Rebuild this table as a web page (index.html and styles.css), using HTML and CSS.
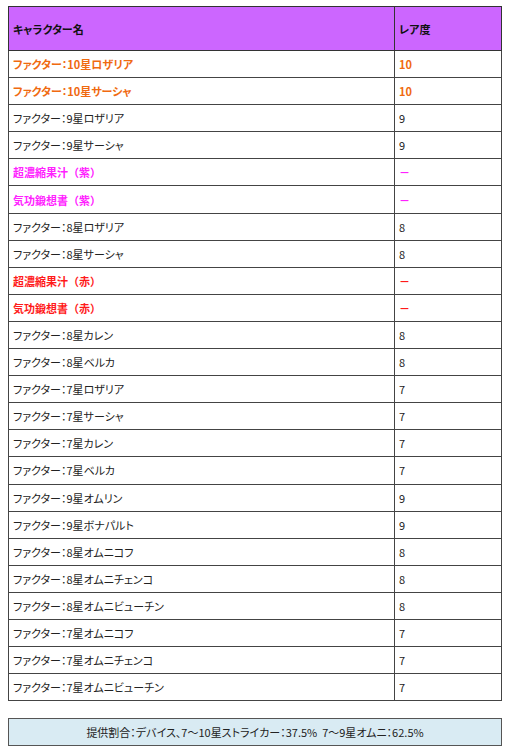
FILE: index.html
```html
<!DOCTYPE html>
<html lang="ja">
<head>
<meta charset="utf-8">
<link rel="stylesheet" href="styles.css">
</head>
<body>
<table class="gacha">
<thead>
<tr><th class="c-name">キャラクター名</th><th class="c-rare">レア度</th></tr>
</thead>
<tbody>
<tr class="orange"><td>ファクター：10星ロザリア</td><td>10</td></tr>
<tr class="orange"><td>ファクター：10星サーシャ</td><td>10</td></tr>
<tr><td>ファクター：9星ロザリア</td><td>9</td></tr>
<tr><td>ファクター：9星サーシャ</td><td>9</td></tr>
<tr class="magenta"><td>超濃縮果汁（紫）</td><td>－</td></tr>
<tr class="magenta"><td>気功鍛想書（紫）</td><td>－</td></tr>
<tr><td>ファクター：8星ロザリア</td><td>8</td></tr>
<tr><td>ファクター：8星サーシャ</td><td>8</td></tr>
<tr class="red"><td>超濃縮果汁（赤）</td><td>－</td></tr>
<tr class="red"><td>気功鍛想書（赤）</td><td>－</td></tr>
<tr><td>ファクター：8星カレン</td><td>8</td></tr>
<tr><td>ファクター：8星ベルカ</td><td>8</td></tr>
<tr><td>ファクター：7星ロザリア</td><td>7</td></tr>
<tr><td>ファクター：7星サーシャ</td><td>7</td></tr>
<tr><td>ファクター：7星カレン</td><td>7</td></tr>
<tr><td>ファクター：7星ベルカ</td><td>7</td></tr>
<tr><td>ファクター：9星オムリン</td><td>9</td></tr>
<tr><td>ファクター：9星ボナパルト</td><td>9</td></tr>
<tr><td>ファクター：8星オムニコフ</td><td>8</td></tr>
<tr><td>ファクター：8星オムニチェンコ</td><td>8</td></tr>
<tr><td>ファクター：8星オムニビューチン</td><td>8</td></tr>
<tr><td>ファクター：7星オムニコフ</td><td>7</td></tr>
<tr><td>ファクター：7星オムニチェンコ</td><td>7</td></tr>
<tr><td>ファクター：7星オムニビューチン</td><td>7</td></tr>
</tbody>
</table>
<div class="note">提供割合：デバイス、7～10星ストライカー：37.5%&nbsp;&nbsp;7～9星オムニ：62.5%</div>
</body>
</html>
```
FILE: styles.css
```css
html, body {
  margin: 0;
  padding: 0;
  background: #ffffff;
}
body {
  padding: 6px 10px 0 8px;
  font-family: "Noto Sans CJK JP", "DejaVu Sans", sans-serif;
  font-feature-settings: "palt" 1;
  font-size: 11px;
  color: #222;
}
.gacha {
  width: 494px;
  border-collapse: collapse;
  table-layout: fixed;
  border: 1px solid #222;
}
.gacha th, .gacha td {
  border: 1px solid #444;
  text-align: left;
  padding: 0 0 0 4px;
  line-height: 14px;
  vertical-align: middle;
}
.gacha th {
  background: #cc66ff;
  height: 43px;
  font-weight: bold;
  color: #111;
  border-color: #333;
}
.gacha td {
  height: 26.1px;
}
.c-name { width: 381px; }
.gacha tr.orange td {
  color: #f06a10;
  font-weight: bold;
}
.gacha tr.magenta td {
  color: #ff22ff;
  font-weight: bold;
  font-feature-settings: normal;
}
.gacha tr.red td {
  color: #ff1a1a;
  font-weight: bold;
  font-feature-settings: normal;
}
.note {
  width: 494px;
  margin-top: 17px;
  height: 28px;
  line-height: 26px;
  box-sizing: border-box;
  border: 1px solid #555;
  background: #d9ebf3;
  text-align: center;
  color: #222;
}
```
